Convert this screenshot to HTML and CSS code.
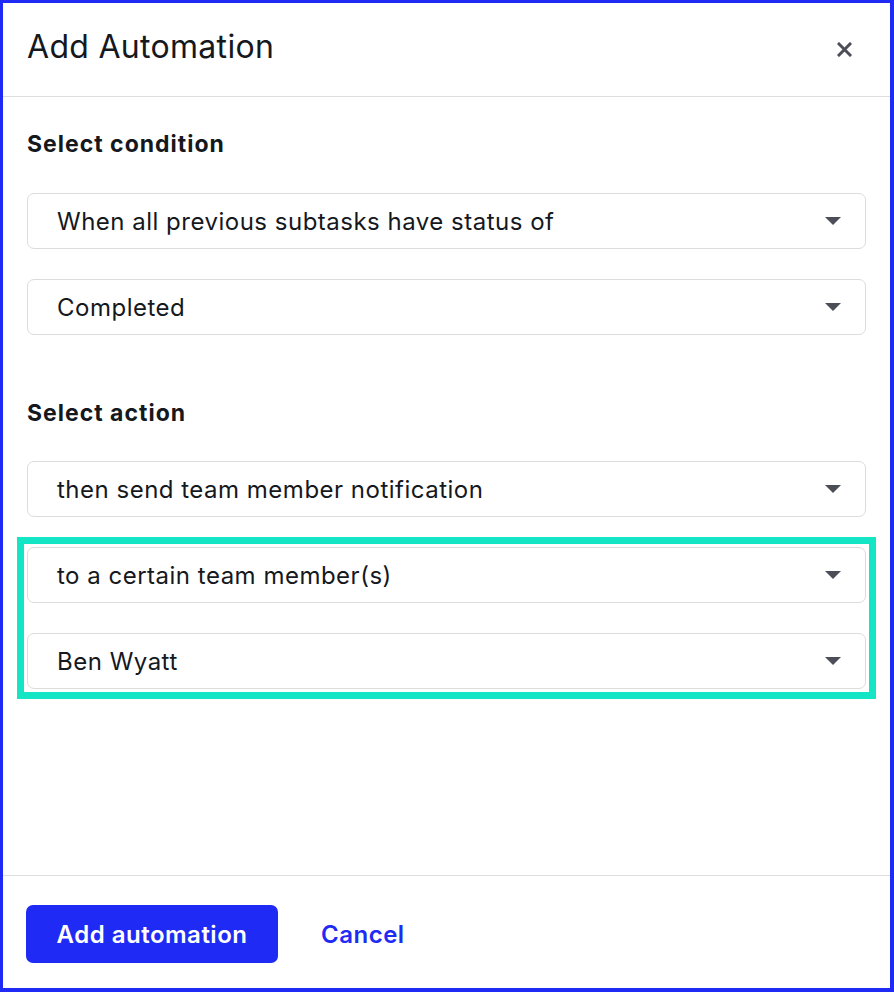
FILE: index.html
```html
<!DOCTYPE html>
<html lang="en">
<head>
    <meta charset="UTF-8">
    <meta name="viewport" content="width=device-width, initial-scale=1.0">
    <title>Add Automation</title>
    <link rel="stylesheet" href="styles.css">
</head>
<body>

    <div class="modal">
        <div class="modal-header">
            <h1>Add Automation</h1>
            <button class="close-btn" aria-label="Close">
                <svg width="15" height="15" viewBox="0 0 15 15">
                    <path d="M2 2 L13 13 M13 2 L2 13" stroke="#4b4e56" stroke-width="3" stroke-linecap="square"/>
                </svg>
            </button>
        </div>

        <div class="modal-body">
            <h2>Select condition</h2>
            <div class="select-list">
                <div class="select">When all previous subtasks have status of<span class="caret"></span></div>
                <div class="select">Completed<span class="caret"></span></div>
            </div>

            <h2 class="section-gap">Select action</h2>
            <div class="select-list">
                <div class="select">then send team member notification<span class="caret"></span></div>
                <div class="select-list highlight">
                    <div class="select">to a certain team member(s)<span class="caret"></span></div>
                    <div class="select">Ben Wyatt<span class="caret"></span></div>
                </div>
            </div>
        </div>

        <div class="modal-footer">
            <button class="primary-btn">Add automation</button>
            <button class="link-btn">Cancel</button>
        </div>
    </div>

</body>
</html>
```

FILE: styles.css
```css
body {
    margin: 0;
    font-family: Inter, "Noto Sans", Arial, sans-serif;
    color: #15181d;
    background: white;
}

.modal {
    box-sizing: border-box;
    width: 894px;
    height: 992px;
    border-style: solid;
    border-color: #1f2bf5;
    border-width: 3px 4px 4px 3px;
    display: flex;
    flex-direction: column;
}

.modal-header {
    height: 93px;
    border-bottom: 1px solid #dedede;
    display: flex;
    align-items: center;
    justify-content: space-between;
    padding: 0 38px 0 24px;
}

h1 {
    margin: 0;
    font-size: 32px;
    font-weight: 400;
    letter-spacing: 0.3px;
    padding-bottom: 6px;
}

.close-btn {
    border: none;
    background: none;
    padding: 0;
    display: flex;
    cursor: pointer;
}

.modal-body {
    flex: 1;
    padding: 32px 24px 0 24px;
}

h2 {
    margin: 0 0 34px 0;
    font-size: 23px;
    font-weight: 650;
    letter-spacing: 1px;
    line-height: 30px;
}

h2.section-gap {
    margin-top: 63px;
    margin-bottom: 33px;
}

.select-list {
    display: flex;
    flex-direction: column;
    gap: 30px;
}

.select {
    box-sizing: border-box;
    height: 56px;
    border: 1px solid #dcdcdc;
    border-radius: 7px;
    padding: 0 24px 0 29px;
    display: flex;
    align-items: center;
    justify-content: space-between;
    font-size: 24px;
    letter-spacing: 0.5px;
}

.caret {
    width: 0;
    height: 0;
    border-left: 8px solid transparent;
    border-right: 8px solid transparent;
    border-top: 8px solid #4b4e56;
}

.highlight {
    outline: 7px solid #14e5c5;
    outline-offset: 3px;
}

.modal-footer {
    border-top: 1px solid #dedede;
    padding: 29px 24px 25px 23px;
    display: flex;
    align-items: center;
    gap: 43px;
}

.primary-btn {
    height: 58px;
    width: 252px;
    background-color: #1f2bf5;
    color: white;
    border: none;
    border-radius: 7px;
    font-family: inherit;
    font-size: 24px;
    font-weight: 600;
    letter-spacing: 0.5px;
    cursor: pointer;
}

.link-btn {
    border: none;
    background: none;
    padding: 0;
    color: #1f2bf5;
    font-family: inherit;
    font-size: 24px;
    font-weight: 600;
    letter-spacing: 0.5px;
    cursor: pointer;
}
```
